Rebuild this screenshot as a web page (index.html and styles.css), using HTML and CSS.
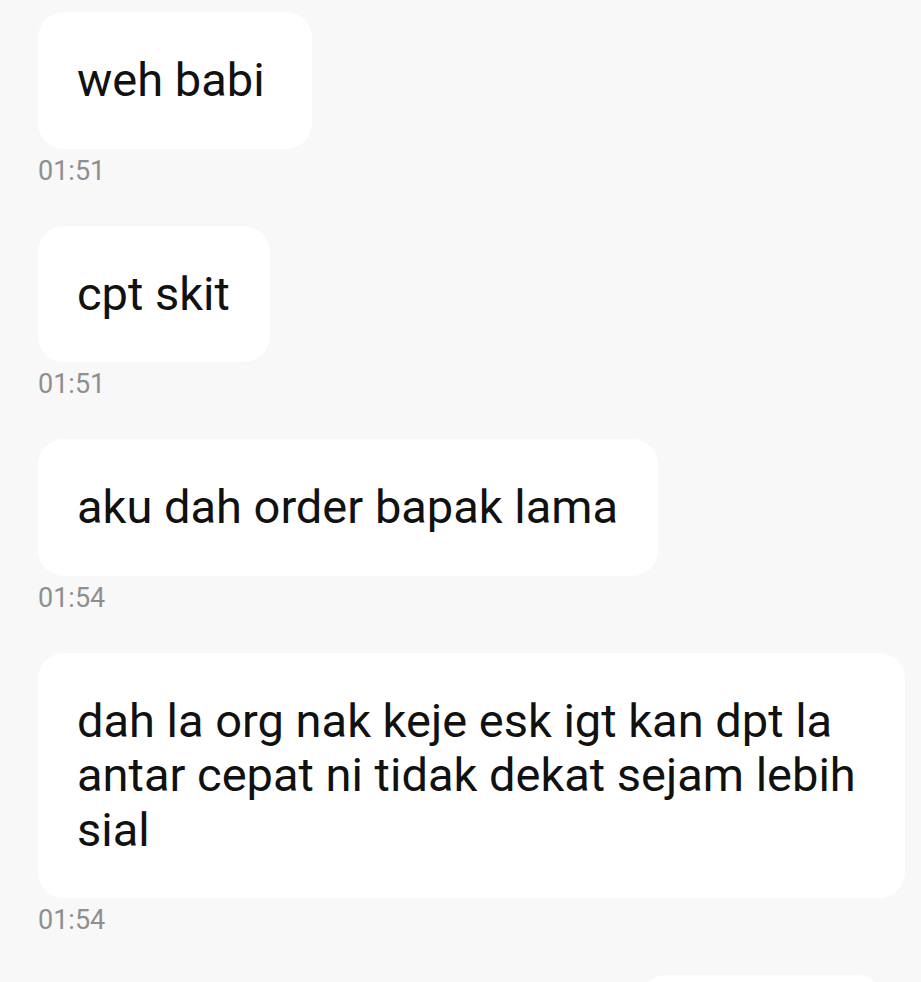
FILE: index.html
```html
<!DOCTYPE html>
<html>
<head>
<meta charset="utf-8">
<link rel="stylesheet" href="styles.css">
</head>
<body>
<div class="chat">
  <div class="msg in">
    <div class="bubble wide">weh babi</div>
    <div class="time">01:51</div>
  </div>
  <div class="msg in">
    <div class="bubble">cpt skit</div>
    <div class="time">01:51</div>
  </div>
  <div class="msg in">
    <div class="bubble">aku dah order bapak lama</div>
    <div class="time">01:54</div>
  </div>
  <div class="msg in">
    <div class="bubble">dah la org nak keje esk igt kan dpt la antar cepat ni tidak dekat sejam lebih sial</div>
    <div class="time">01:54</div>
  </div>
  <div class="msg out">
    <div class="bubble stub"></div>
  </div>
</div>
</body>
</html>
```

FILE: styles.css
```css
html, body {
  margin: 0;
  padding: 0;
  background: #f8f8f8;
  height: 982px;
  overflow: hidden;
}
.chat {
  display: flex;
  flex-direction: column;
  gap: 39px;
  padding: 12px 16px 0 38px;
  font-family: Roboto, "Noto Sans", sans-serif;
}
.msg {
  display: flex;
  flex-direction: column;
  align-items: flex-start;
}
.msg.out {
  align-items: flex-end;
  padding-right: 22px;
}
.bubble {
  background: #ffffff;
  border-radius: 26px;
  padding: 41px 40px 41px 39px;
  font-size: 47px;
  line-height: 54.5px;
  color: #111111;
  max-width: 788px;
}
.bubble.wide {
  padding-right: 47px;
}
.bubble.stub {
  width: 164px;
  height: 54px;
}
.time {
  margin-top: 6px;
  font-size: 27px;
  line-height: 32px;
  color: #8f8f8f;
}
```
